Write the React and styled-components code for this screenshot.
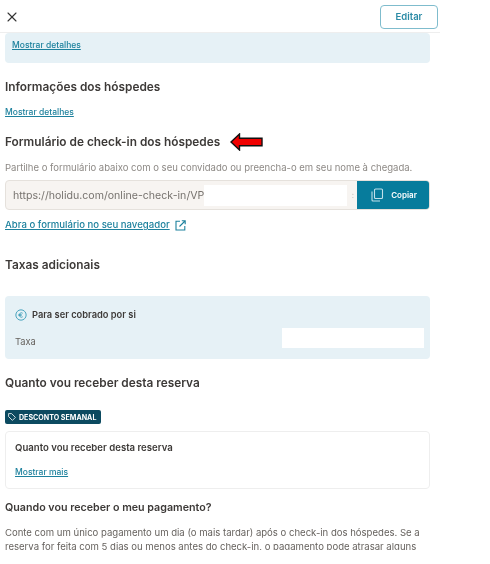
import React from 'react'
import styled, { createGlobalStyle } from 'styled-components'
import { X } from 'lucide-react'

const GlobalStyle = createGlobalStyle`
 html,
 body {
  margin: 0;
  background: #fff;
 }
 body {
  font-family: Inter, 'Noto Sans', sans-serif;
  color: #3d3a38;
 }
`

const Page = styled.div`
 width: 440px;
 height: 550px;
 overflow: hidden;
 filter: blur(0.5px);
`

const Header = styled.header`
 height: 33px;
 box-sizing: border-box;
 display: flex;
 align-items: center;
 justify-content: space-between;
 padding: 1px 2px 0 4px;
 border-bottom: 1px solid #eeeeee;
 color: #333;
`

const EditButton = styled.button`
 width: 58px;
 height: 24px;
 padding: 0;
 border: 1px solid #7fbccd;
 border-radius: 4px;
 background: #fff;
 color: #2b8ba6;
 font: 600 9.5px Inter, sans-serif;
`

const Content = styled.main`
 padding: 0 10px 0 5px;
`

const Panel = styled.section`
 background: #e6f1f6;
 border-radius: 4px;
 padding: ${(p) => p.$padding};
`

const TextLink = styled.a`
 display: block;
 width: fit-content;
 margin-top: ${(p) => p.$top || 0}px;
 font-size: ${(p) => p.$size || 8.5}px;
 font-weight: 500;
 line-height: 12px;
 color: #1d819d;
 text-decoration: underline;
 text-underline-offset: 1px;
`

const Heading = styled.h2`
 margin: ${(p) => p.$margin};
 font-size: ${(p) => p.$size || 11.85}px;
 font-weight: 600;
 line-height: 16px;
 color: #3d3a38;
`

const Hint = styled.p`
 margin: 11px 0 0;
 font-size: 9.53px;
 line-height: 12px;
 color: #8d8985;
 white-space: nowrap;
`

const LinkRow = styled.div`
 margin-top: 9px;
 display: flex;
 align-items: center;
 gap: 5px;
 height: 12px;
 color: #1d819d;
`

const HeadingRow = styled.div`
 margin-top: 15px;
 display: flex;
 align-items: center;
 gap: 10px;
`

const UrlField = styled.div`
 margin-top: 6px;
 height: 30px;
 box-sizing: border-box;
 display: flex;
 align-items: stretch;
 border: 1px solid #e5e1dc;
 border-radius: 4px;
 background: #f7f4f1;
 overflow: hidden;
`

const UrlText = styled.div`
 flex: 1;
 display: flex;
 align-items: center;
 padding: 0 3px 0 7px;
 font-size: 10.6px;
 color: #77736f;
 white-space: nowrap;
`

const Redaction = styled.span`
 display: block;
 width: ${(p) => p.$width}px;
 height: ${(p) => p.$height}px;
 background: #fff;
`

const UrlTail = styled.span`
 margin-left: auto;
 font-size: 8px;
 color: #b5b1ad;
`

const CopyButton = styled.button`
 width: 73px;
 flex: none;
 margin: -1px -1px -1px 0;
 padding: 0;
 display: flex;
 align-items: center;
 justify-content: center;
 gap: 7px;
 border: 0;
 background: #077c9c;
 color: #fff;
 font: 600 8px Inter, sans-serif;
`

const FeeTitle = styled.div`
 display: flex;
 align-items: center;
 gap: 5px;
 font-size: 9.3px;
 font-weight: 600;
 line-height: 14px;
`

const FeeRow = styled.div`
 margin-top: 6px;
 display: flex;
 align-items: flex-end;
 justify-content: space-between;
 font-size: 9.3px;
 line-height: 12px;
 color: #66625e;
`

const Tag = styled.div`
 margin-top: 19px;
 width: 96px;
 height: 14px;
 box-sizing: border-box;
 padding-left: 3px;
 display: flex;
 align-items: center;
 gap: 3px;
 border-radius: 2px;
 background: #0c4a60;
 color: #fff;
 font-size: 7.1px;
 font-weight: 700;
 white-space: nowrap;
`

const Card = styled.section`
 margin-top: 7px;
 height: 58px;
 box-sizing: border-box;
 padding: 9px 9px;
 border: 1px solid #eeeeee;
 border-radius: 4px;
`

const CardTitle = styled.div`
 margin-bottom: 11px;
 font-size: 9.6px;
 font-weight: 600;
 line-height: 14px;
`

const Body = styled.p`
 margin: 10px 0 0;
 font-size: 9.55px;
 line-height: 14px;
 color: #66625e;
`

const CopyIcon = () => (
 <svg width="14" height="14" viewBox="0 0 14 14" fill="none" stroke="#bfe0ea" strokeWidth="1.1">
  <rect x="4.5" y="1" width="8" height="9.5" rx="1" />
  <path d="M2 3.5v8.5a1 1 0 0 0 1 1h7" />
 </svg>
)

const OpenIcon = () => (
 <svg width="11" height="11" viewBox="0 0 11 11" fill="none" stroke="currentColor" strokeWidth="1.1">
  <path d="M5 1.2H1v8.8h8.8V6" />
  <path d="M4.5 6.5 10 1M6.8 .8H10.2V4.2" />
 </svg>
)

const EuroIcon = () => (
 <svg width="12" height="12" viewBox="0 0 13 13" fill="none" stroke="#3d9db8">
  <circle cx="6.5" cy="6.5" r="5.6" strokeWidth="1" />
  <path d="M8.4 4.6a2.4 2.4 0 1 0 0 3.8M3.8 5.9h3.4M3.8 7.1h3.4" strokeWidth=".9" />
 </svg>
)

const TagIcon = () => (
 <svg width="8" height="8" viewBox="0 0 8 8" fill="none" stroke="#fff" strokeWidth=".8">
  <path d="M.6.6h3l3.8 3.8-3 3L.6 3.6z" />
 </svg>
)

const RedArrow = () => (
 <svg width="33" height="18" viewBox="0 0 33 18">
  <path d="M1 9 9.5 1v4.2H32v7.6H9.5V17z" fill="#f00000" stroke="#111" strokeWidth="1.4" />
 </svg>
)

export default function App() {
 return (
  <Page>
   <GlobalStyle />
   <Header>
    <X size={16} strokeWidth={1.6} />
    <EditButton>Editar</EditButton>
   </Header>
   <Content>
    <Panel $padding="6px 7px 12px">
     <TextLink>Mostrar detalhes</TextLink>
    </Panel>
    <Heading $margin="16px 0 0">Informações dos hóspedes</Heading>
    <TextLink $top={11}>Mostrar detalhes</TextLink>
    <HeadingRow>
     <Heading $margin="0">Formulário de check-in dos hóspedes</Heading>
     <RedArrow />
    </HeadingRow>
    <Hint>Partilhe o formulário abaixo com o seu convidado ou preencha-o em seu nome à chegada.</Hint>
    <UrlField>
     <UrlText>
      https://holidu.com/online-check-in/VP
      <Redaction $width={143} $height={21} />
      <UrlTail>:</UrlTail>
     </UrlText>
     <CopyButton>
      <CopyIcon />
      Copiar
     </CopyButton>
    </UrlField>
    <LinkRow>
     <TextLink $size={9.6}>Abra o formulário no seu navegador</TextLink>
     <OpenIcon />
    </LinkRow>
    <Heading $margin="26px 0 23px">Taxas adicionais</Heading>
    <Panel $padding="12px 6px 11px 10px">
     <FeeTitle>
      <EuroIcon />
      Para ser cobrado por si
     </FeeTitle>
     <FeeRow>
      Taxa
      <Redaction $width={142} $height={20} />
     </FeeRow>
    </Panel>
    <Heading $margin="16px 0 0">Quanto vou receber desta reserva</Heading>
    <Tag>
     <TagIcon />
     DESCONTO SEMANAL
    </Tag>
    <Card>
     <CardTitle>Quanto vou receber desta reserva</CardTitle>
     <TextLink>Mostrar mais</TextLink>
    </Card>
    <Heading $margin="11px 0 0" $size={10.7}>
     Quando vou receber o meu pagamento?
    </Heading>
    <Body>
     Conte com um único pagamento um dia (o mais tardar) após o check-in dos hóspedes. Se a
     reserva for feita com 5 dias ou menos antes do check-in, o pagamento pode atrasar alguns
     dias.
    </Body>
   </Content>
  </Page>
 )
}
